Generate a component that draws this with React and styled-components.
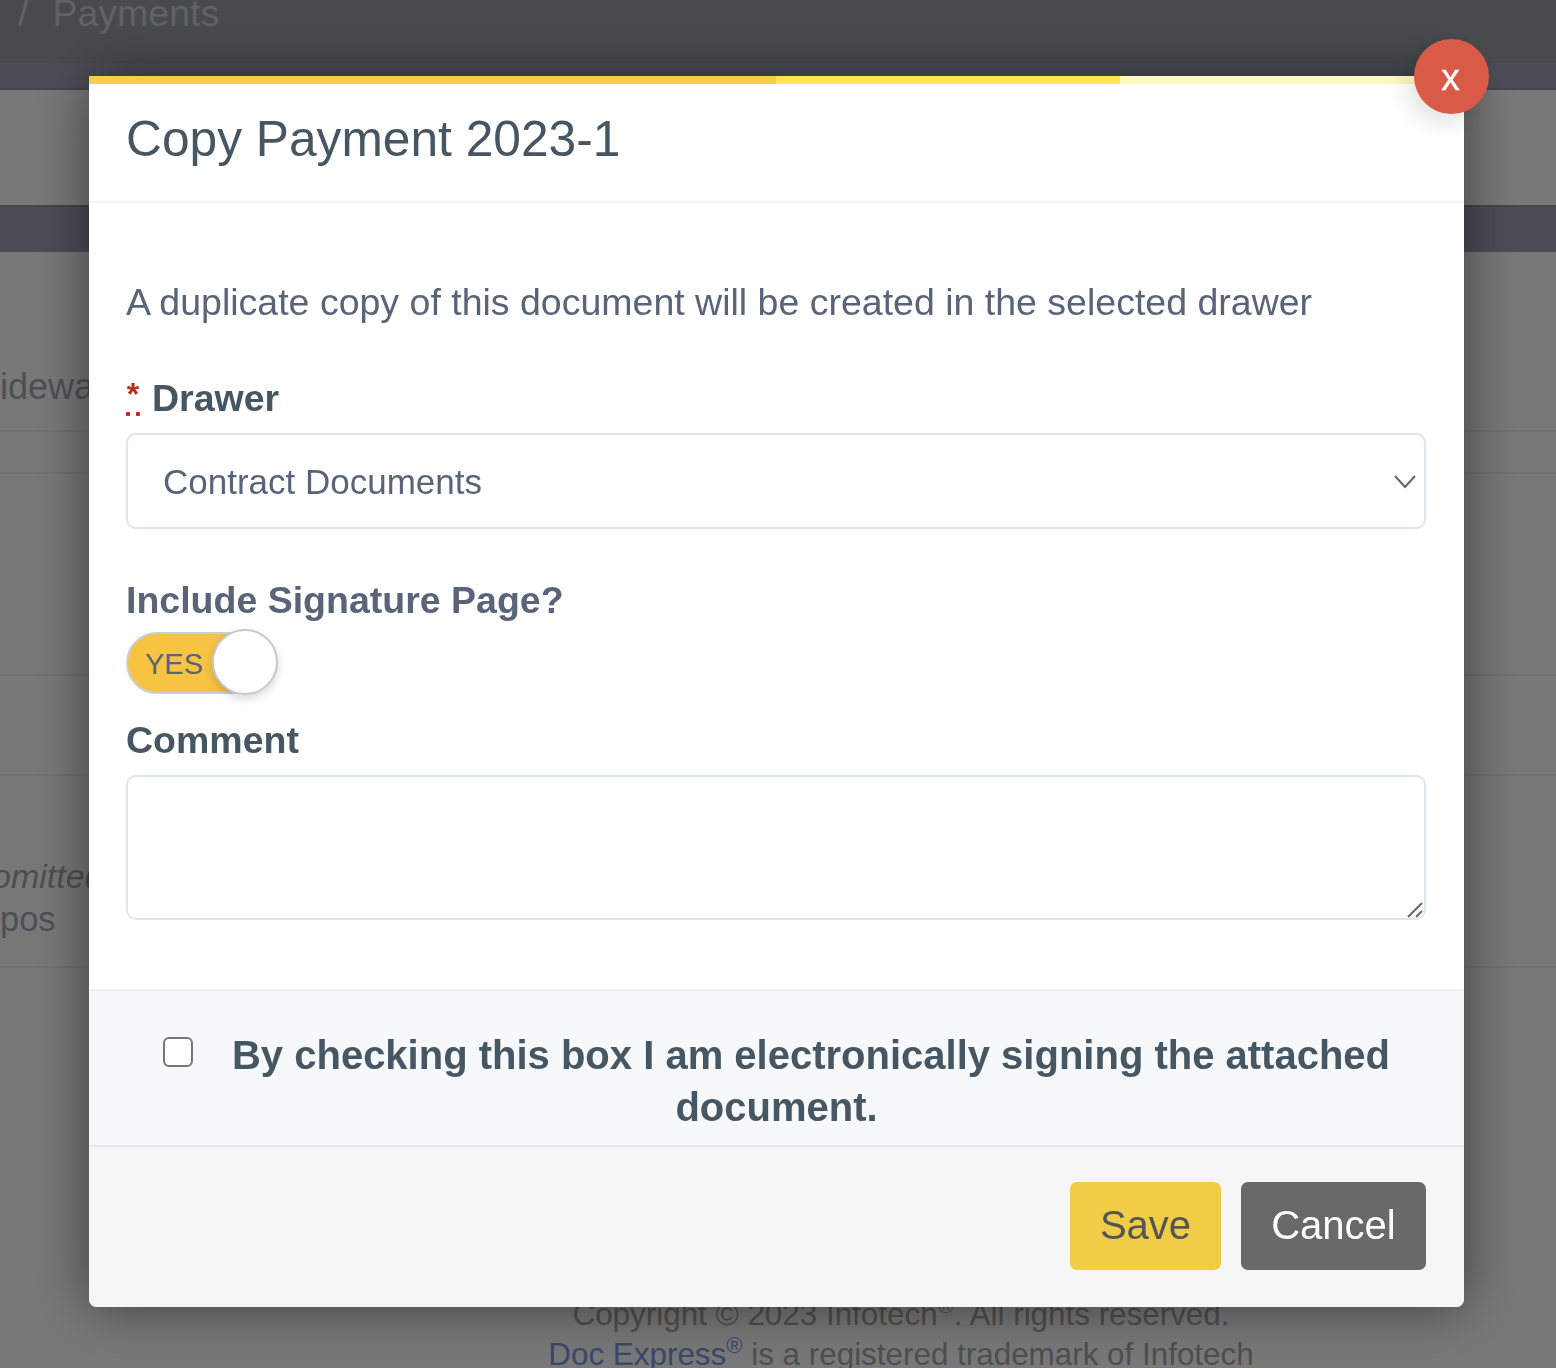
import React from "react";
import styled, { createGlobalStyle } from "styled-components";

const GlobalStyle = createGlobalStyle`
  html, body {
    margin: 0;
    padding: 0;
    height: 1368px;
    overflow: hidden;
    background: #fff;
    font-family: "Liberation Sans", Arial, sans-serif;
  }
`;

const Page = styled.div`
  height: 1368px;
  overflow: hidden;
  display: flex;
  flex-direction: column;
`;

const TopBar = styled.div`
  height: 63px;
  flex: none;
  background: #9a9ea6;
  overflow: hidden;
  color: #ccd0d8;
  font-size: 37.5px;
  line-height: 40px;
  padding-left: 18px;
`;

const Crumb = styled.div`
  margin-top: -7px;
  display: flex;
  gap: 24px;
`;

const SubBar = styled.div`
  height: ${(props) => props.height}px;
  flex: none;
  background: #9fa5b6;
  box-sizing: border-box;
  border-${(props) => props.edge}: 2px solid #8f95a5;
`;

const Hero = styled.div`
  height: 115px;
  flex: none;
  background: #fff;
`;

const Row = styled.div`
  height: ${(props) => props.height}px;
  flex: none;
  box-sizing: border-box;
  border-bottom: 2px solid #eee;
  overflow: hidden;
  white-space: nowrap;
  font-size: 36px;
  color: #a4a9b5;
  padding-top: ${(props) => props.top || 0}px;
`;

const Submitted = styled.div`
  font-style: italic;
  font-size: 34px;
  margin-left: -8px;
  color: #a6a6aa;
  line-height: 42px;
`;

const RowText = styled.div`
  line-height: 44px;
  font-size: ${(props) => props.size || 36}px;
`;

const SiteFooter = styled.div`
  padding: 327px 0 0 246px;
  text-align: center;
  font-size: 31.4px;
  line-height: 40px;
  color: #a8a8a8;
`;

const FooterLink = styled.span`
  color: #7a9be0;
`;

const Reg = styled.span`
  font-size: 22px;
  line-height: 0;
  vertical-align: 12px;
`;

const Overlay = styled.div`
  position: fixed;
  inset: 0;
  background: rgba(0, 0, 0, 0.53);
`;

const Modal = styled.div`
  position: relative;
  margin: 76px 0 0 89px;
  width: 1375px;
  height: 1231px;
  display: flex;
  flex-direction: column;
  background: #fff;
  border-radius: 0 0 8px 8px;
  box-shadow: 0 0 55px rgba(0, 0, 0, 0.5);
`;

const Progress = styled.div`
  display: flex;
  height: 8px;
  flex: none;
`;

const Segment = styled.div`
  width: ${(props) => props.width}px;
  flex: ${(props) => (props.width ? "none" : 1)};
  background: ${(props) => props.color};
`;

const CloseButton = styled.button`
  position: absolute;
  top: -37px;
  right: -25px;
  width: 75px;
  height: 75px;
  border: 0;
  padding: 2px 2px 0 0;
  border-radius: 50%;
  background: #d85a47;
  color: #fff;
  font: 37px "Liberation Sans", Arial, sans-serif;
  -webkit-text-stroke: 0.4px #fff;
  box-shadow: -6px 8px 24px rgba(0, 0, 0, 0.12);
`;

const Header = styled.div`
  height: 119px;
  flex: none;
  box-sizing: border-box;
  padding: 25px 38px 0 37px;
  border-bottom: 2px solid #f5f5f5;
`;

const Title = styled.h4`
  margin: 0;
  font-size: 49.7px;
  line-height: 60px;
  font-weight: 400;
  color: #465763;
`;

const Body = styled.div`
  height: 786px;
  flex: none;
  box-sizing: border-box;
  padding: 75px 38px 0 37px;
  display: flex;
  flex-direction: column;
`;

const Intro = styled.p`
  margin: 0 0 50px;
  font-size: 37.5px;
  line-height: 48px;
  color: #5a6478;
`;

const Label = styled.label`
  display: flex;
  align-items: flex-start;
  gap: 12px;
  font-size: 37.5px;
  line-height: 44px;
  font-weight: 700;
  color: ${(props) => props.color || "#465763"};
`;

const Required = styled.abbr`
  display: block;
  width: 14px;
  height: 40px;
  text-align: center;
  text-decoration: none;
  line-height: 36px;
  color: #b92c1e;
  font-size: 32px;
  overflow: hidden;
  background: radial-gradient(circle, #b92c1e 2px, transparent 2.5px) -3px bottom / 10px 4px repeat-x;
`;

const SelectBox = styled.div`
  margin-top: 13px;
  height: 96px;
  box-sizing: border-box;
  flex: none;
  display: flex;
  align-items: center;
  justify-content: space-between;
  padding: 2px 7px 0 35px;
  border: 2px solid #dfe6ec;
  border-radius: 10px;
  font-size: 35px;
  color: #5a6478;
`;

const SignatureBlock = styled.div`
  margin-top: 49px;
`;

const Toggle = styled.div`
  position: relative;
  margin-top: 7px;
  width: 152px;
  height: 66px;
  display: flex;
  align-items: center;
`;

const ToggleTrack = styled.div`
  width: 118px;
  height: 62px;
  margin-top: 2px;
  box-sizing: border-box;
  border: 2px solid #c8d0dc;
  border-radius: 31px 0 0 31px;
  background: #f6c342;
  padding-left: 17px;
  font-size: 29px;
  line-height: 60px;
  color: #5a6478;
`;

const ToggleKnob = styled.div`
  position: absolute;
  right: 0;
  top: 0;
  width: 66px;
  height: 66px;
  box-sizing: border-box;
  border: 2px solid #c5c9d6;
  border-radius: 50%;
  background: #fff;
  box-shadow: 0 4px 8px rgba(0, 0, 0, 0.15);
`;

const CommentBlock = styled.div`
  margin-top: 23px;
`;

const CommentBox = styled.div`
  position: relative;
  margin-top: 13px;
`;

const CommentInput = styled.textarea`
  display: block;
  width: 100%;
  height: 145px;
  box-sizing: border-box;
  border: 2px solid #dfe6ec;
  border-radius: 10px;
  background: #fff;
  resize: none;
  outline: none;
`;

const Grip = styled.svg`
  position: absolute;
  right: 3px;
  bottom: 2px;
`;

const SignStrip = styled.div`
  height: 158px;
  flex: none;
  box-sizing: border-box;
  padding: 38px 38px 0;
  background: #f7f8fa;
  border-top: 2px solid #eef0f4;
  border-bottom: 2px solid #e6e7e9;
  text-align: center;
  font-size: 40px;
  line-height: 52px;
  font-weight: 700;
  color: #465763;
`;

const SignCheck = styled.input`
  appearance: none;
  width: 30px;
  height: 30px;
  margin: 0 39px 0 0;
  box-sizing: border-box;
  border: 2.5px solid #767676;
  border-radius: 6px;
  background: #fff;
  vertical-align: 2px;
`;

const Actions = styled.div`
  flex: 1;
  display: flex;
  justify-content: flex-end;
  gap: 20px;
  padding: 35px 38px 0;
  background: #f6f6f6;
  border-radius: 0 0 8px 8px;
`;

const ActionButton = styled.button`
  height: 88px;
  border: 0;
  padding: 0 0 2px;
  border-radius: 7px;
  width: ${(props) => props.width}px;
  background: ${(props) => props.bg};
  color: ${(props) => props.fg};
  font: 40px "Liberation Sans", Arial, sans-serif;
`;

const App = () => {
  return (
    <>
      <GlobalStyle />
      <Page>
        <TopBar>
          <Crumb>
            <span>/</span>
            <span>Payments</span>
          </Crumb>
        </TopBar>
        <SubBar height={27} edge="bottom" />
        <Hero />
        <SubBar height={47} edge="top" />
        <Row height={180} top={113}>
          <RowText>idewa</RowText>
        </Row>
        <Row height={42} />
        <Row height={202} />
        <Row height={100} />
        <Row height={192} top={79}>
          <Submitted>omitted</Submitted>
          <RowText size={34.5}>pos</RowText>
        </Row>
        <SiteFooter>
          Copyright © 2023 Infotech<Reg>®</Reg>. All rights reserved.
          <br />
          <FooterLink>Doc Express<Reg>®</Reg></FooterLink> is a registered trademark of Infotech
        </SiteFooter>
      </Page>
      <Overlay>
        <Modal>
          <Progress>
            <Segment width={687} color="#f8ce45" />
            <Segment width={344} color="#fde64f" />
            <Segment color="#fdf8bd" />
          </Progress>
          <CloseButton>x</CloseButton>
          <Header>
            <Title>Copy Payment 2023-1</Title>
          </Header>
          <Body>
            <Intro>A duplicate copy of this document will be created in the selected drawer</Intro>
            <Label>
              <Required title="required">*</Required>
              Drawer
            </Label>
            <SelectBox>
              Contract Documents
              <svg width="24" height="16" viewBox="0 0 24 16" fill="none">
                <path d="M2 2 L12 13 L22 2" stroke="#5a6478" strokeWidth="2" />
              </svg>
            </SelectBox>
            <SignatureBlock>
              <Label color="#5a6478">Include Signature Page?</Label>
              <Toggle>
                <ToggleTrack>YES</ToggleTrack>
                <ToggleKnob />
              </Toggle>
            </SignatureBlock>
            <CommentBlock>
              <Label>Comment</Label>
              <CommentBox>
                <CommentInput />
                <Grip width="16" height="16" viewBox="0 0 16 16" fill="none">
                  <path d="M1 15 L15 1 M9 15 L15 9" stroke="#666" strokeWidth="2" />
                </Grip>
              </CommentBox>
            </CommentBlock>
          </Body>
          <SignStrip>
            <SignCheck type="checkbox" />
            By checking this box I am electronically signing the attached document.
          </SignStrip>
          <Actions>
            <ActionButton width={151} bg="#f1cc46" fg="#555">Save</ActionButton>
            <ActionButton width={185} bg="#696969" fg="#fff">Cancel</ActionButton>
          </Actions>
        </Modal>
      </Overlay>
    </>
  );
};

export default App;
